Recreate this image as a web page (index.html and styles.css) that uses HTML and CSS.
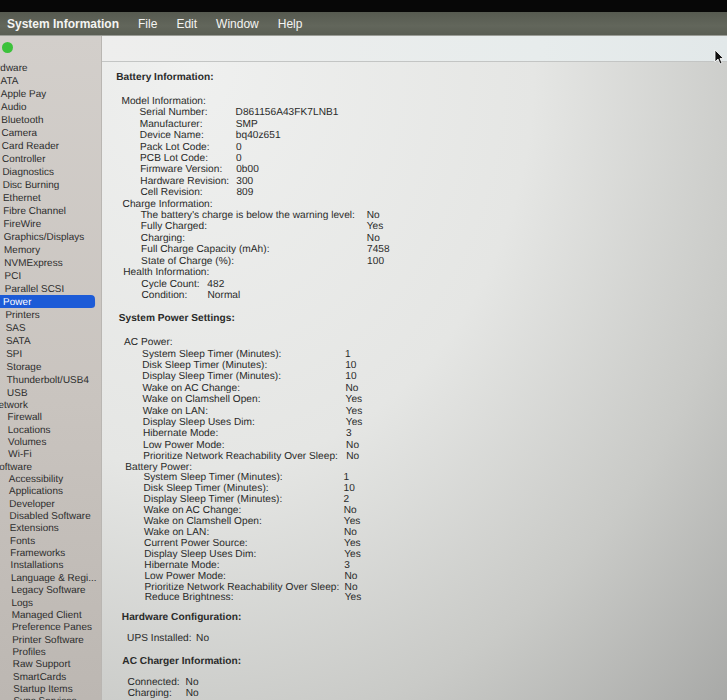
FILE: index.html
```html
<!DOCTYPE html>
<html lang="en">
<head>
    <meta charset="UTF-8" />
    <meta name="viewport" content="width=device-width, initial-scale=1" />
    <title>System Information</title>
    <link rel="stylesheet" href="styles.css">
</head>
<body>
    <div class="bezel"></div>
    <div class="menubar">
        <span class="app-name">System Information</span>
        <span>File</span>
        <span>Edit</span>
        <span>Window</span>
        <span>Help</span>
    </div>

    <div class="window">
        <div class="sidebar">
            <div class="traffic"><span class="dot green"></span></div>
            <ul class="tree">
                <li class="cat hardware">Hardware
                    <ul>
                        <li>ATA</li>
                        <li>Apple Pay</li>
                        <li>Audio</li>
                        <li>Bluetooth</li>
                        <li>Camera</li>
                        <li>Card Reader</li>
                        <li>Controller</li>
                        <li>Diagnostics</li>
                        <li>Disc Burning</li>
                        <li>Ethernet</li>
                        <li>Fibre Channel</li>
                        <li>FireWire</li>
                        <li>Graphics/Displays</li>
                        <li>Memory</li>
                        <li>NVMExpress</li>
                        <li>PCI</li>
                        <li>Parallel SCSI</li>
                        <li class="selected">Power</li>
                        <li>Printers</li>
                        <li>SAS</li>
                        <li>SATA</li>
                        <li>SPI</li>
                        <li>Storage</li>
                        <li>Thunderbolt/USB4</li>
                        <li>USB</li>
                    </ul>
                </li>
                <li class="cat">Network
                    <ul>
                        <li>Firewall</li>
                        <li>Locations</li>
                        <li>Volumes</li>
                        <li>Wi-Fi</li>
                    </ul>
                </li>
                <li class="cat">Software
                    <ul>
                        <li>Accessibility</li>
                        <li>Applications</li>
                        <li>Developer</li>
                        <li>Disabled Software</li>
                        <li>Extensions</li>
                        <li>Fonts</li>
                        <li>Frameworks</li>
                        <li>Installations</li>
                        <li>Language &amp; Regi...</li>
                        <li>Legacy Software</li>
                        <li>Logs</li>
                        <li>Managed Client</li>
                        <li>Preference Panes</li>
                        <li>Printer Software</li>
                        <li>Profiles</li>
                        <li>Raw Support</li>
                        <li>SmartCards</li>
                        <li>Startup Items</li>
                        <li>Sync Services</li>
                    </ul>
                </li>
            </ul>
        </div>

        <div class="main">
            <div class="toolbar">
                <svg class="cursor" width="10" height="16" viewBox="0 0 10 16">
                    <path d="M1 1 L1 13 L4 10 L6 15 L8 14 L6 9.5 L9.5 9.5 Z" fill="#111" stroke="#fff" stroke-width="0.8"/>
                </svg>
            </div>

            <div class="report">
                <div class="section">
                    <div class="title">Battery Information:</div>
                    <div class="group">
                        <div class="head">Model Information:</div>
                        <div class="rows model">
                            <span>Serial Number:</span><span>D861156A43FK7LNB1</span>
                            <span>Manufacturer:</span><span>SMP</span>
                            <span>Device Name:</span><span>bq40z651</span>
                            <span>Pack Lot Code:</span><span>0</span>
                            <span>PCB Lot Code:</span><span>0</span>
                            <span>Firmware Version:</span><span>0b00</span>
                            <span>Hardware Revision:</span><span>300</span>
                            <span>Cell Revision:</span><span>809</span>
                        </div>
                    </div>
                    <div class="group">
                        <div class="head">Charge Information:</div>
                        <div class="rows charge">
                            <span>The battery's charge is below the warning level:</span><span>No</span>
                            <span>Fully Charged:</span><span>Yes</span>
                            <span>Charging:</span><span>No</span>
                            <span>Full Charge Capacity (mAh):</span><span>7458</span>
                            <span>State of Charge (%):</span><span>100</span>
                        </div>
                    </div>
                    <div class="group">
                        <div class="head">Health Information:</div>
                        <div class="rows health">
                            <span>Cycle Count:</span><span>482</span>
                            <span>Condition:</span><span>Normal</span>
                        </div>
                    </div>
                </div>

                <div class="section power">
                    <div class="title">System Power Settings:</div>
                    <div class="group">
                        <div class="head">AC Power:</div>
                        <div class="rows ac">
                            <span>System Sleep Timer (Minutes):</span><span>1</span>
                            <span>Disk Sleep Timer (Minutes):</span><span>10</span>
                            <span>Display Sleep Timer (Minutes):</span><span>10</span>
                            <span>Wake on AC Change:</span><span>No</span>
                            <span>Wake on Clamshell Open:</span><span>Yes</span>
                            <span>Wake on LAN:</span><span>Yes</span>
                            <span>Display Sleep Uses Dim:</span><span>Yes</span>
                            <span>Hibernate Mode:</span><span>3</span>
                            <span>Low Power Mode:</span><span>No</span>
                            <span>Prioritize Network Reachability Over Sleep:</span><span>No</span>
                        </div>
                    </div>
                    <div class="group battery">
                        <div class="head">Battery Power:</div>
                        <div class="rows battery">
                            <span>System Sleep Timer (Minutes):</span><span>1</span>
                            <span>Disk Sleep Timer (Minutes):</span><span>10</span>
                            <span>Display Sleep Timer (Minutes):</span><span>2</span>
                            <span>Wake on AC Change:</span><span>No</span>
                            <span>Wake on Clamshell Open:</span><span>Yes</span>
                            <span>Wake on LAN:</span><span>No</span>
                            <span>Current Power Source:</span><span>Yes</span>
                            <span>Display Sleep Uses Dim:</span><span>Yes</span>
                            <span>Hibernate Mode:</span><span>3</span>
                            <span>Low Power Mode:</span><span>No</span>
                            <span>Prioritize Network Reachability Over Sleep:</span><span>No</span>
                            <span>Reduce Brightness:</span><span>Yes</span>
                        </div>
                    </div>
                </div>

                <div class="section tail">
                    <div class="title">Hardware Configuration:</div>
                    <div class="rows flat ups">
                        <span>UPS Installed:</span><span>No</span>
                    </div>
                </div>

                <div class="section tail">
                    <div class="title">AC Charger Information:</div>
                    <div class="rows flat charger">
                        <span>Connected:</span><span>No</span>
                        <span>Charging:</span><span>No</span>
                    </div>
                </div>
            </div>
        </div>
    </div>
</body>
</html>
```

FILE: styles.css
```css
html, body { margin: 0; height: 100%; overflow: hidden; }
body { background: #070707; font-family: "Liberation Sans", Arial, sans-serif; color: #2a2b2a; }

.bezel { height: 12px; background: #070707; }

.menubar { height: 23px; display: flex; align-items: center; gap: 19px; padding-left: 7px; background: linear-gradient(#565a50, #62665b 60%, #5a5e54); color: #f4f4f2; font-size: 12px; border-bottom: 1px solid #9a9c96; }
.menubar .app-name { font-weight: bold; }

.window { display: flex; height: 664px; }

/* source list */
.sidebar { width: 101px; flex: none; overflow: hidden; background: linear-gradient(#d3cfcb, #c9c4bf 55%, #bcb7b2); border-right: 1px solid #b9b6b2; font-size: 10px; color: #2d2d2d; }
.traffic { height: 18.5px; padding-top: 6px; }
.dot { display: block; width: 11px; height: 11px; border-radius: 50%; margin-left: 2px; }
.dot.green { background: #3cc23b; }

.tree, .tree ul { list-style: none; margin: 0; padding: 0; }
.tree { transform: skewX(1.2deg); transform-origin: 0 0; }
.tree li { line-height: 12.35px; white-space: nowrap; }
.tree li.cat { margin-left: -16px; }
.tree li.cat > ul { margin-left: 16px; }
.tree li.hardware, .tree li.hardware li { line-height: 13px; }
.tree li.selected { background: #1c5bd7; color: #fff; border-radius: 4px; margin-left: -8px; padding-left: 6px; width: 98px; box-sizing: border-box; }

/* report pane */
.main { flex: 1; display: flex; flex-direction: column; background: radial-gradient(ellipse at 15% 5%, #eff0ef 0%, #e5e6e4 45%, #c9cac7 75%, #a8a9a7 100%); }
.toolbar { height: 25px; flex: none; border-bottom: 1px solid #c3c5c4; background: linear-gradient(90deg, #eeeeed, #e7ecec 70%, #e2e8e9); display: flex; justify-content: flex-end; align-items: flex-start; }
.cursor { margin: 13px 3px 0 0; }

.report { padding: 9px 0 0 14px; font-size: 10.2px; line-height: 11.4px; transform: skewX(0.6deg); transform-origin: 0 0; }
.section { margin-bottom: 11.8px; }
.section.power { margin-bottom: 8px; }
.section.tail { line-height: 11px; margin-bottom: 12px; }
.title { font-weight: bold; margin-bottom: 12.6px; }
.section.tail .title { margin-bottom: 10px; }
.group { padding-left: 5px; }
.group.battery { line-height: 10.9px; }
.rows { display: grid; padding-left: 18px; white-space: nowrap; }
.rows.flat { padding-left: 5px; }
.rows.model { grid-template-columns: 96px auto; }
.rows.charge { grid-template-columns: 226px auto; }
.rows.health { grid-template-columns: 66px auto; }
.rows.ac { grid-template-columns: 203px auto; }
.rows.battery { grid-template-columns: 200px auto; }
.rows.ups { grid-template-columns: 69px auto; }
.rows.charger { grid-template-columns: 58px auto; }
```
